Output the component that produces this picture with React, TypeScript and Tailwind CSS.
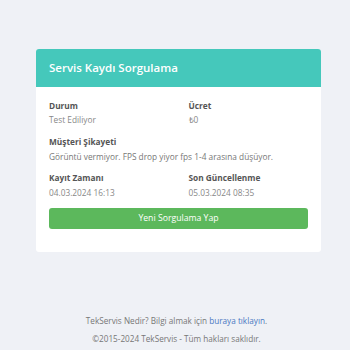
import React from 'react'

export default function App() {
  return (
    <div className="min-h-[350px] w-[350px] bg-[#eff1f6] pt-[49px]" style={{ fontFamily: '"Open Sans", sans-serif' }}>
      <div className="w-[285px] ml-[36px] bg-white rounded-[3px] overflow-hidden">
        <div className="h-[38px] bg-[#45c8bb] px-[13px] flex items-center">
          <h1 className="text-white text-[11.5px] font-semibold">Servis Kaydı Sorgulama</h1>
        </div>
        <div className="px-[13px] pt-[13px] pb-[23px] text-[8.3px]">
          <div className="grid grid-cols-2 gap-x-5">
            <div>
              <div className="font-bold text-[#555] leading-[12px]">Durum</div>
              <div className="text-[#888] leading-[12px] mt-[2px]">Test Ediliyor</div>
            </div>
            <div>
              <div className="font-bold text-[#555] leading-[12px]">Ücret</div>
              <div className="text-[#888] leading-[12px] mt-[2px]">₺0</div>
            </div>
          </div>
          <div className="mt-[10px]">
            <div className="font-bold text-[#555] leading-[12px]">Müşteri Şikayeti</div>
            <div className="text-[#777] leading-[12px] mt-[3px]">Görüntü vermiyor. FPS drop yiyor fps 1-4 arasına düşüyor.</div>
          </div>
          <div className="grid grid-cols-2 gap-x-5 mt-[9px]">
            <div>
              <div className="font-bold text-[#555] leading-[12px]">Kayıt Zamanı</div>
              <div className="text-[#888] leading-[12px] mt-[3px]">04.03.2024 16:13</div>
            </div>
            <div>
              <div className="font-bold text-[#555] leading-[12px]">Son Güncellenme</div>
              <div className="text-[#888] leading-[12px] mt-[3px]">05.03.2024 08:35</div>
            </div>
          </div>
          <button className="mt-[9px] w-full h-[21px] rounded-[3px] bg-[#5cb85c] text-white text-[8.7px]">Yeni Sorgulama Yap</button>
        </div>
      </div>
      <div className="mt-[60px] text-[8.2px] text-[#777] text-center leading-[17.5px] pl-[3px]">
        <p>TekServis Nedir? Bilgi almak için <a className="text-[#4a78c2]">buraya tıklayın</a>.</p>
        <p>©2015-2024 TekServis - Tüm hakları saklıdır.</p>
      </div>
    </div>
  )
}
